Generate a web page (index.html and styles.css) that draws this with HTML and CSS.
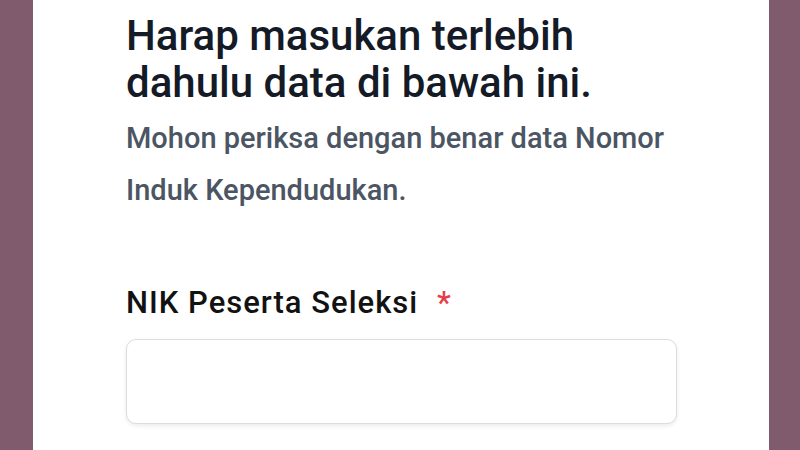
FILE: index.html
```html
<!DOCTYPE html>
<html lang="id">
<head>
<meta charset="utf-8">
<link rel="stylesheet" href="styles.css">
</head>
<body>
<div class="page">
  <main class="card">
    <h1 class="title">Harap masukan terlebih dahulu data di bawah ini.</h1>
    <p class="subtitle">Mohon periksa dengan benar data Nomor Induk Kependudukan.</p>
    <label class="label" for="nik">NIK Peserta Seleksi <span class="req">*</span></label>
    <input class="field" id="nik" type="text">
  </main>
</div>
</body>
</html>
```

FILE: styles.css
```css
html, body {
  margin: 0;
  padding: 0;
  height: 100%;
  overflow: hidden;
}
body {
  background: #7f5b6d;
  font-family: Roboto, "Noto Sans", sans-serif;
}
.page {
  width: 800px;
  height: 450px;
}
.card {
  display: block;
  margin-left: 33px;
  width: 736px;
  height: 450px;
  background: #ffffff;
  padding: 12px 0 0 93px;
  box-sizing: border-box;
}
.title {
  margin: 0;
  width: 480px;
  font-size: 42px;
  font-weight: 500;
  line-height: 47px;
  color: #141a26;
}
.subtitle {
  margin: 6px 0 0 0;
  width: 600px;
  font-size: 29px;
  font-weight: 500;
  line-height: 52px;
  color: #4b5563;
}
.label {
  display: block;
  margin-top: 70px;
  font-size: 31px;
  line-height: 34px;
  font-weight: 500;
  letter-spacing: 1px;
  color: #121212;
}
.req {
  color: #e5404a;
  margin-left: 10px;
}
.field {
  display: block;
  margin: 19px 0 0 0;
  width: 551px;
  height: 85px;
  box-sizing: border-box;
  border: 1.5px solid #dadcdf;
  border-radius: 10px;
  box-shadow: 0 2px 4px rgba(0,0,0,0.08);
  background: #fff;
}
```
